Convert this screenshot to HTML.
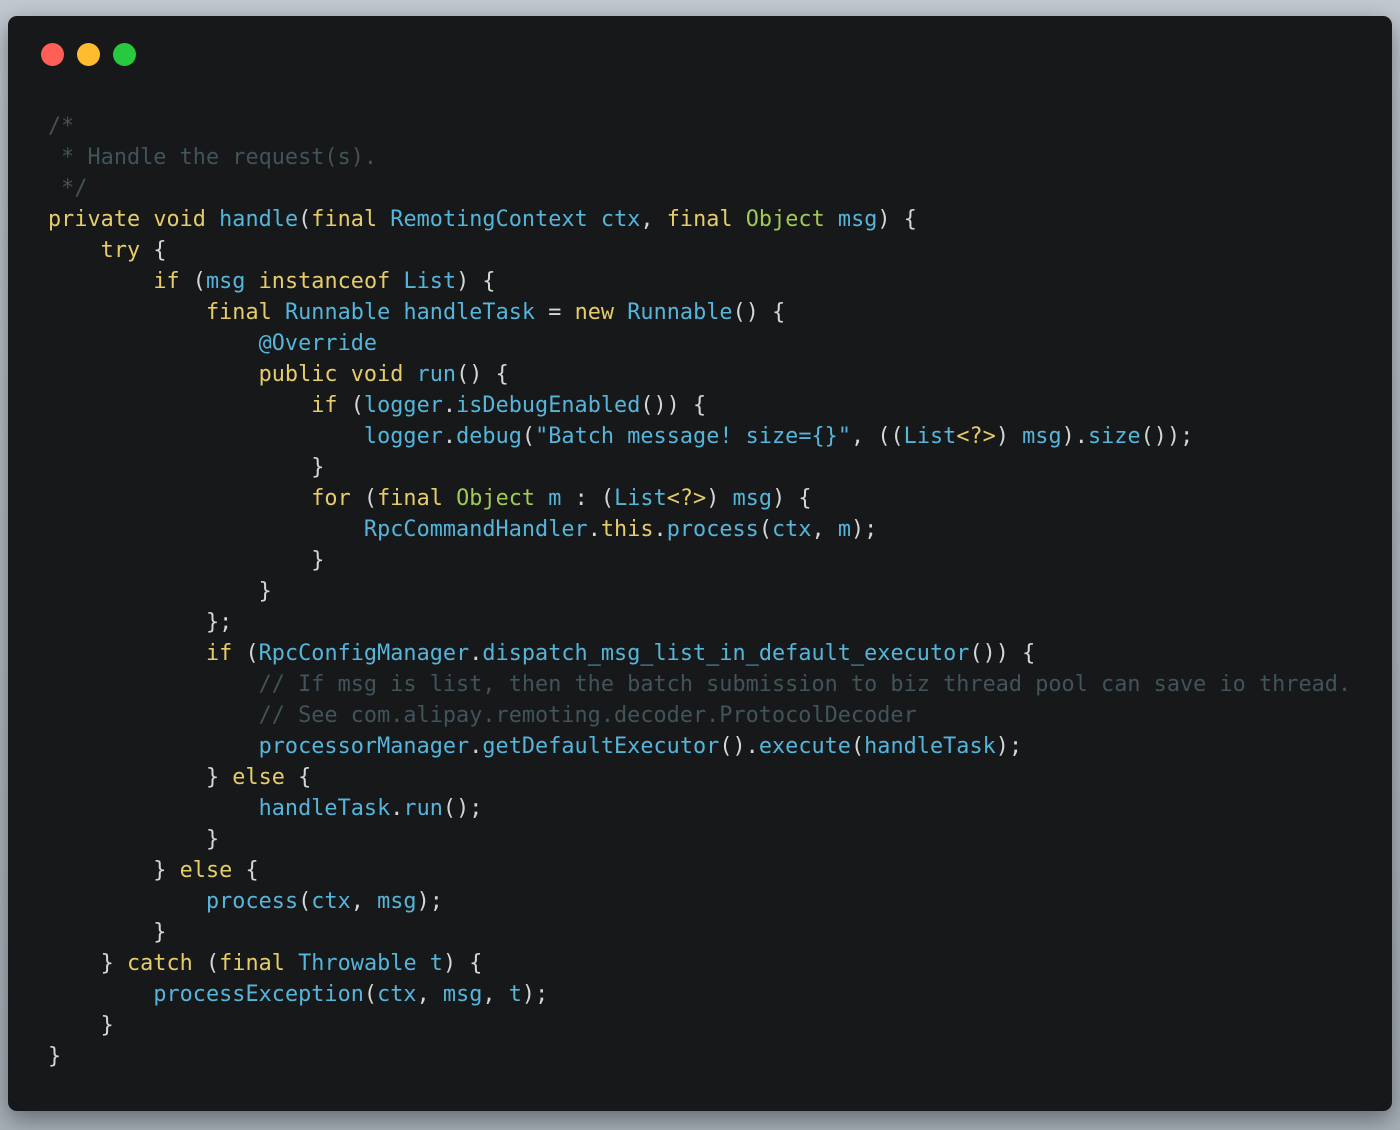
<!DOCTYPE html>
<html><head><meta charset="utf-8"><style>
html,body{margin:0;padding:0}
body{width:1400px;height:1130px;background:linear-gradient(#c3c9d0,#a8b0b8);position:relative;overflow:hidden}
.win{position:absolute;left:8px;top:16px;width:1384px;height:1095px;background:#17181a;border-radius:9px;box-shadow:0 8px 24px rgba(40,45,55,.55)}
.d{position:absolute;top:27px;width:23px;height:23px;border-radius:50%}
pre{position:absolute;left:40px;top:95px;margin:0;font-family:"DejaVu Sans Mono","Liberation Mono",monospace;font-size:21.8px;letter-spacing:0.04px;line-height:31px;color:#d4d7d6}
.k{color:#e6cd69}.b{color:#55b5db}.g{color:#9fca56}.c{color:#41535b}
</style></head><body><div class="win">
<div class="d" style="left:33px;background:#ff5f56"></div>
<div class="d" style="left:69px;background:#ffbd2e"></div>
<div class="d" style="left:105px;background:#27c93f"></div>
<pre><span class="c">/*
 * Handle the request(s).
 */</span>
<span class="k">private</span> <span class="k">void</span> <span class="b">handle</span>(<span class="k">final</span> <span class="b">RemotingContext</span> <span class="b">ctx</span>, <span class="k">final</span> <span class="g">Object</span> <span class="b">msg</span>) {
    <span class="k">try</span> {
        <span class="k">if</span> (<span class="b">msg</span> <span class="k">instanceof</span> <span class="b">List</span>) {
            <span class="k">final</span> <span class="b">Runnable</span> <span class="b">handleTask</span> = <span class="k">new</span> <span class="b">Runnable</span>() {
                <span class="b">@Override</span>
                <span class="k">public</span> <span class="k">void</span> <span class="b">run</span>() {
                    <span class="k">if</span> (<span class="b">logger</span>.<span class="b">isDebugEnabled</span>()) {
                        <span class="b">logger</span>.<span class="b">debug</span>(<span class="b">"Batch message! size={}"</span>, ((<span class="b">List</span><span class="k">&lt;?&gt;</span>) <span class="b">msg</span>).<span class="b">size</span>());
                    }
                    <span class="k">for</span> (<span class="k">final</span> <span class="g">Object</span> <span class="b">m</span> : (<span class="b">List</span><span class="k">&lt;?&gt;</span>) <span class="b">msg</span>) {
                        <span class="b">RpcCommandHandler</span>.<span class="k">this</span>.<span class="b">process</span>(<span class="b">ctx</span>, <span class="b">m</span>);
                    }
                }
            };
            <span class="k">if</span> (<span class="b">RpcConfigManager</span>.<span class="b">dispatch_msg_list_in_default_executor</span>()) {
                <span class="c">// If msg is list, then the batch submission to biz thread pool can save io thread.
                // See com.alipay.remoting.decoder.ProtocolDecoder</span>
                <span class="b">processorManager</span>.<span class="b">getDefaultExecutor</span>().<span class="b">execute</span>(<span class="b">handleTask</span>);
            } <span class="k">else</span> {
                <span class="b">handleTask</span>.<span class="b">run</span>();
            }
        } <span class="k">else</span> {
            <span class="b">process</span>(<span class="b">ctx</span>, <span class="b">msg</span>);
        }
    } <span class="k">catch</span> (<span class="k">final</span> <span class="b">Throwable</span> <span class="b">t</span>) {
        <span class="b">processException</span>(<span class="b">ctx</span>, <span class="b">msg</span>, <span class="b">t</span>);
    }
}</pre>
</div></body></html>
